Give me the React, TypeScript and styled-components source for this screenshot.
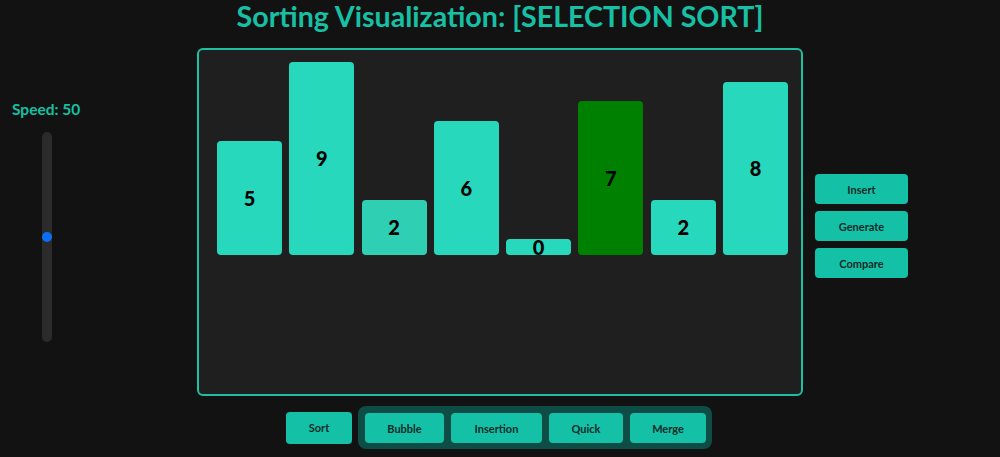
import React from "react";
import styled, { createGlobalStyle } from "styled-components";

const GlobalStyle = createGlobalStyle`
  body {
    margin: 0;
    background: #121212;
    font-family: "Lato", "Open Sans", sans-serif;
  }
`;

const Page = styled.div`
  width: 1000px;
  height: 457px;
  display: flex;
  flex-direction: column;
  align-items: center;
  overflow: hidden;
`;

const Title = styled.h1`
  margin: 0;
  height: 48px;
  line-height: 34px;
  margin-top: -1px;
  margin-bottom: 1px;
  font-size: 28.6px;
  font-weight: 700;
  color: #17c0a4;
  white-space: nowrap;
`;

const MainRow = styled.div`
  width: 100%;
  display: flex;
  align-items: center;
`;

const SpeedPanel = styled.div`
  width: 197px;
  display: flex;
  flex-direction: column;
  padding-bottom: 2px;
`;

const SpeedLabel = styled.div`
  padding-left: 12px;
  font-size: 15.5px;
  font-weight: 700;
  color: #17c0a4;
  margin-bottom: 14px;
`;

const Track = styled.div`
  position: relative;
  margin-left: 42px;
  width: 10px;
  height: 210px;
  border-radius: 5px;
  background: #2b2b2b;
`;

const Thumb = styled.div`
  position: absolute;
  left: 0;
  width: 10px;
  height: 10px;
  border-radius: 50%;
  background: #0b6ff5;
  transform: translateY(-50%);
`;

const Board = styled.div`
  box-sizing: border-box;
  flex-shrink: 0;
  width: 606px;
  height: 348px;
  border: 2px solid #1fbfa3;
  border-radius: 6px;
  background: #1f1f1f;
  padding: 12px 13px 0 18px;
`;

const Bars = styled.div`
  height: 193px;
  display: flex;
  align-items: flex-end;
  gap: 7.3px;
`;

const Bar = styled.div<{ $tone: "idle" | "checked" | "current" }>`
  width: 65px;
  border-radius: 4px;
  background: ${(p) =>
    p.$tone === "current" ? "#008000" : p.$tone === "checked" ? "#2ecfb3" : "#28d8bd"};
  display: flex;
  align-items: center;
  justify-content: center;
  font-size: 20px;
  font-weight: 900;
  color: #000;
`;

const SideButtons = styled.div`
  margin-left: 12px;
  display: flex;
  flex-direction: column;
  gap: 7px;
  margin-top: 8px;
`;

const Button = styled.button<{ $w?: number; $h?: number }>`
  width: ${(p) => p.$w ?? 93}px;
  height: ${(p) => p.$h ?? 30}px;
  border: 0;
  border-radius: 4px;
  background: #14c1a6;
  color: #102a28;
  font-family: "Lato", "Open Sans", sans-serif;
  font-size: 11px;
  font-weight: 700;
  padding: 0;
  cursor: pointer;
`;

const BottomRow = styled.div`
  margin-top: 10px;
  display: flex;
  align-items: center;
  gap: 6px;
  margin-left: -2px;
`;

const AlgoGroup = styled.div`
  display: flex;
  gap: 7px;
  padding: 7px 6px 6px 7px;
  border-radius: 8px;
  background: #0d4d45;
`;

const values = [5, 9, 2, 6, 0, 7, 2, 8];

const App = () => {
  return (
    <>
      <GlobalStyle />
      <Page>
        <Title>Sorting Visualization: [SELECTION SORT]</Title>
        <MainRow>
          <SpeedPanel>
            <SpeedLabel>Speed: 50</SpeedLabel>
            <Track>
              <Thumb style={{ top: "50%" }} />
            </Track>
          </SpeedPanel>
          <Board>
            <Bars>
              {values.map((v, i) => (
                <Bar
                  key={i}
                  $tone={i === 5 ? "current" : i === 2 ? "checked" : "idle"}
                  style={{ height: 16 + v * 19.67 }}
                >
                  {v}
                </Bar>
              ))}
            </Bars>
          </Board>
          <SideButtons>
            <Button>Insert</Button>
            <Button>Generate</Button>
            <Button>Compare</Button>
          </SideButtons>
        </MainRow>
        <BottomRow>
          <Button $w={66} $h={32}>Sort</Button>
          <AlgoGroup>
            <Button $w={79}>Bubble</Button>
            <Button $w={91}>Insertion</Button>
            <Button $w={74}>Quick</Button>
            <Button $w={76}>Merge</Button>
          </AlgoGroup>
        </BottomRow>
      </Page>
    </>
  );
};

export default App;
